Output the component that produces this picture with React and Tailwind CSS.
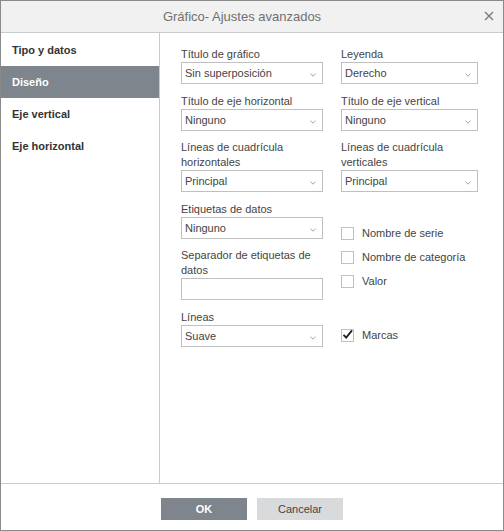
import React from "react";

const Chevron = () => (
  <svg width="6" height="4" viewBox="0 0 6 4" className="absolute right-[6px] top-[10px]">
    <path d="M0.5 0.6 L3 3.2 L5.5 0.6" fill="none" stroke="#9a9a9a" strokeWidth="0.9" />
  </svg>
);

const Select = ({ value }) => (
  <div className="relative h-[22px] border border-[#c0c0c0] bg-white pl-[3px] text-[11px] leading-[20px] text-[#444]">
    {value}
    <Chevron />
  </div>
);

const Label = ({ children, two }) => (
  <div className={`text-[11px] text-[#444] ${two ? "leading-[15px]" : "leading-[16px]"}`}>{children}</div>
);

const Check = ({ label, checked }) => (
  <div className="flex h-[24px] items-center">
    <div className="relative h-[13px] w-[13px] border border-[#c0c0c0] bg-white">
      {checked && (
        <svg width="13" height="13" viewBox="0 0 13 13" className="absolute -left-[1px] -top-[2px]">
          <path d="M2.5 6.8 L5.2 9.6 L11 2.4" fill="none" stroke="#222" strokeWidth="1.9" />
        </svg>
      )}
    </div>
    <span className="ml-[8px] text-[11px] text-[#444]">{label}</span>
  </div>
);

export default function App() {
  return (
    <div
      className="flex h-[531px] w-[504px] flex-col border border-[#8a8a8a] bg-white"
      style={{ fontFamily: '"Liberation Sans", Arial, sans-serif' }}
    >
      <div className="relative flex h-[32px] shrink-0 items-center justify-center border-b border-[#cbcbcb] bg-[#f1f1f1] pr-[20px] text-[13px] text-[#707070]">
        Gráfico- Ajustes avanzados
        <svg width="10" height="10" viewBox="0 0 10 10" className="absolute right-[9px] top-[10px]">
          <path d="M1 1 L9 9 M9 1 L1 9" stroke="#7a7a7a" strokeWidth="1.4" />
        </svg>
      </div>
      <div className="flex flex-1">
        <div className="w-[159px] shrink-0 border-r border-[#cbcbcb] pt-[1px]">
          <div className="flex h-[32px] items-center pl-[11px] text-[11px] font-bold text-[#333]">Tipo y datos</div>
          <div className="flex h-[32px] items-center bg-[#7e858c] pl-[11px] text-[11px] font-bold text-white">Diseño</div>
          <div className="flex h-[32px] items-center pl-[11px] text-[11px] font-bold text-[#333]">Eje vertical</div>
          <div className="flex h-[32px] items-center pl-[11px] text-[11px] font-bold text-[#333]">Eje horizontal</div>
        </div>
        <div className="flex-1 pl-[21px] pt-[13px]">
          <div className="grid grid-cols-[142px_137px] gap-x-[18px]">
            <div>
              <Label>Título de gráfico</Label>
              <Select value="Sin superposición" />
            </div>
            <div>
              <Label>Leyenda</Label>
              <Select value="Derecho" />
            </div>
            <div className="mt-[9px]">
              <Label>Título de eje horizontal</Label>
              <Select value="Ninguno" />
            </div>
            <div className="mt-[9px]">
              <Label>Título de eje vertical</Label>
              <Select value="Ninguno" />
            </div>
            <div className="mt-[9px]">
              <Label two>Líneas de cuadrícula<br />horizontales</Label>
              <Select value="Principal" />
            </div>
            <div className="mt-[9px]">
              <Label two>Líneas de cuadrícula<br />verticales</Label>
              <Select value="Principal" />
            </div>
            <div className="mt-[9px]">
              <Label>Etiquetas de datos</Label>
              <Select value="Ninguno" />
              <div className="mt-[9px]">
                <Label two>Separador de etiquetas de<br />datos</Label>
                <div className="h-[22px] border border-[#c0c0c0] bg-white" />
              </div>
            </div>
            <div className="mt-[9px] pt-[20px]">
              <Check label="Nombre de serie" />
              <Check label="Nombre de categoría" />
              <Check label="Valor" />
            </div>
            <div className="mt-[9px]">
              <Label>Líneas</Label>
              <Select value="Suave" />
            </div>
            <div className="mt-[9px] pt-[14px]">
              <Check label="Marcas" checked />
            </div>
          </div>
        </div>
      </div>
      <div className="flex h-[47px] shrink-0 justify-center gap-[10px] border-t border-[#cbcbcb] pt-[14px]">
        <div className="flex h-[22px] w-[86px] items-center justify-center bg-[#7e858c] text-[11px] font-bold text-white">OK</div>
        <div className="flex h-[22px] w-[86px] items-center justify-center bg-[#d8dadc] text-[11px] text-[#444]">Cancelar</div>
      </div>
    </div>
  );
}
